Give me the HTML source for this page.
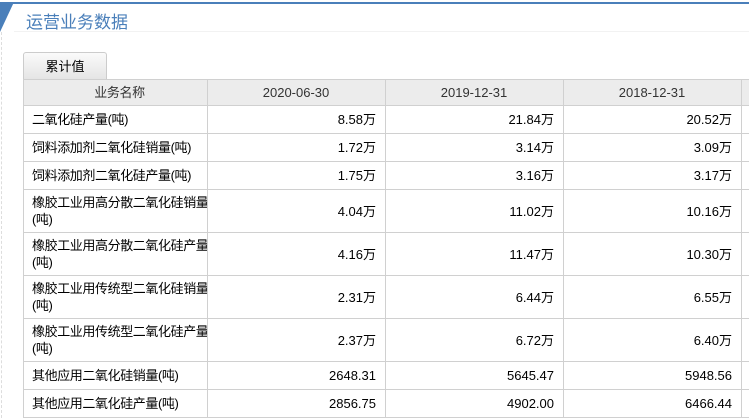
<!DOCTYPE html>
<html><head><meta charset="utf-8"><style>
body{margin:0;width:749px;height:418px;overflow:hidden;background:#fff;font-family:"Liberation Sans","Noto Sans CJK SC",sans-serif;font-size:13px;color:#000;position:relative}
.top{position:absolute;left:0;top:2px;width:749px;height:2px;background:#4a7fba}
.tri{position:absolute;left:0;top:2px;width:0;height:0;border-top:30px solid #4a7fba;border-right:14px solid transparent}
.lb{position:absolute;left:1px;top:32px;width:0;height:386px;border-left:1px dashed #ddd}
.title{position:absolute;left:26px;top:8px;font-size:17px;color:#4a7fba}
.tl{position:absolute;left:14px;top:31px;width:735px;height:1px;background:#f2f2f2}
.tab{position:absolute;left:23px;top:52px;width:82px;height:27px;border:1px solid #ccc;border-bottom:none;border-radius:3px 3px 0 0;background:linear-gradient(#fafafa,#e4e4e4);text-align:center;line-height:27px}
table{position:absolute;left:23px;top:79px;border-collapse:collapse;table-layout:fixed;width:738px}
td{border:1px solid #d0d0d0;padding:0 9px 0 8px;line-height:17px;box-sizing:border-box}
td:first-child{padding-right:0;white-space:nowrap;overflow:hidden;letter-spacing:-0.4px}
tr.h td{background:#ececec;text-align:center;color:#333;height:26px}
td.n{text-align:right}
</style></head><body>
<div class="top"></div><div class="tri"></div><div class="lb"></div>
<div class="title">运营业务数据</div><div class="tl"></div>
<div class="tab">累计值</div>
<table>
<colgroup><col style="width:184px"><col style="width:178px"><col style="width:178px"><col style="width:178px"><col style="width:20px"></colgroup>
<tr class="h"><td style="text-align:center">业务名称</td><td>2020-06-30</td><td>2019-12-31</td><td>2018-12-31</td><td></td></tr>
<tr style="height:28px"><td>二氧化硅产量(吨)</td><td class="n">8.58万</td><td class="n">21.84万</td><td class="n">20.52万</td><td></td></tr>
<tr style="height:28px"><td>饲料添加剂二氧化硅销量(吨)</td><td class="n">1.72万</td><td class="n">3.14万</td><td class="n">3.09万</td><td></td></tr>
<tr style="height:28px"><td>饲料添加剂二氧化硅产量(吨)</td><td class="n">1.75万</td><td class="n">3.16万</td><td class="n">3.17万</td><td></td></tr>
<tr style="height:43px"><td>橡胶工业用高分散二氧化硅销量<br>(吨)</td><td class="n">4.04万</td><td class="n">11.02万</td><td class="n">10.16万</td><td></td></tr>
<tr style="height:43px"><td>橡胶工业用高分散二氧化硅产量<br>(吨)</td><td class="n">4.16万</td><td class="n">11.47万</td><td class="n">10.30万</td><td></td></tr>
<tr style="height:43px"><td>橡胶工业用传统型二氧化硅销量<br>(吨)</td><td class="n">2.31万</td><td class="n">6.44万</td><td class="n">6.55万</td><td></td></tr>
<tr style="height:43px"><td>橡胶工业用传统型二氧化硅产量<br>(吨)</td><td class="n">2.37万</td><td class="n">6.72万</td><td class="n">6.40万</td><td></td></tr>
<tr style="height:28px"><td>其他应用二氧化硅销量(吨)</td><td class="n">2648.31</td><td class="n">5645.47</td><td class="n">5948.56</td><td></td></tr>
<tr style="height:28px"><td>其他应用二氧化硅产量(吨)</td><td class="n">2856.75</td><td class="n">4902.00</td><td class="n">6466.44</td><td></td></tr>
</table>
</body></html>
